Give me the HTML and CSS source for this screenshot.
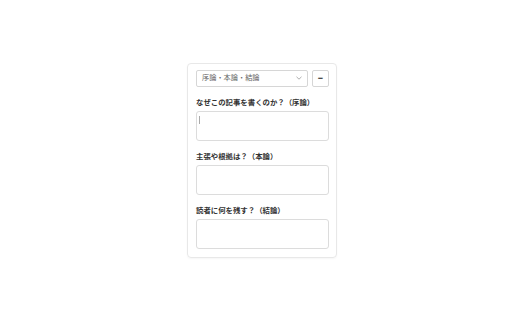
FILE: index.html
```html
<!DOCTYPE html>
<html lang="ja">
<head>
<meta charset="utf-8">
<link rel="stylesheet" href="styles.css">
</head>
<body>
<main class="stage">
  <div class="card">
    <div class="row">
      <div class="select">
        <span class="select-text">序論・本論・結論</span>
        <svg class="chev" width="6" height="4" viewBox="0 0 6 4"><path d="M0.5 0.8 L3 3.2 L5.5 0.8" fill="none" stroke="#999" stroke-width="0.8"/></svg>
      </div>
      <button class="btn">−</button>
    </div>
    <div class="field">
      <div class="label">なぜこの記事を書くのか？（序論）</div>
      <div class="box focused"><span class="caret"></span></div>
    </div>
    <div class="field">
      <div class="label">主張や根拠は？（本論）</div>
      <div class="box"></div>
    </div>
    <div class="field">
      <div class="label">読者に何を残す？（結論）</div>
      <div class="box"></div>
    </div>
  </div>
</main>
</body>
</html>
```
FILE: styles.css
```css
html, body {
  margin: 0;
  padding: 0;
  background: #fff;
  font-family: "Noto Sans CJK JP", "Noto Sans", sans-serif;
}
.stage {
  width: 512px;
  height: 320px;
  display: flex;
  align-items: center;
  justify-content: center;
  padding-left: 12px;
  box-sizing: border-box;
}
.card {
  width: 150px;
  box-sizing: border-box;
  border: 1px solid #e8e8e8;
  border-radius: 4px;
  box-shadow: 0 1px 2px rgba(0,0,0,0.04);
  padding: 6px 7px 8px 8px;
  display: flex;
  flex-direction: column;
}
.row {
  display: flex;
  gap: 4px;
  height: 17px;
}
.select {
  flex: 1;
  box-sizing: border-box;
  border: 1px solid #d6d6d6;
  border-radius: 2px;
  display: flex;
  align-items: center;
  padding: 0 5px;
  justify-content: space-between;
}
.select-text {
  font-size: 7.2px;
  color: #666;
  line-height: 1;
}
.btn {
  width: 17px;
  height: 17px;
  padding: 0;
  box-sizing: border-box;
  border: 1px solid #d6d6d6;
  border-radius: 2px;
  background: #fff;
  font-size: 9px;
  font-weight: bold;
  color: #111;
  line-height: 1;
  font-family: "Liberation Sans", sans-serif;
}
.field {
  margin-top: 10px;
  display: flex;
  flex-direction: column;
}
.field:first-of-type {
  margin-top: 12px;
}
.label {
  font-size: 7.4px;
  font-weight: bold;
  color: #333;
  line-height: 10px;
  margin-bottom: 4px;
}
.box {
  height: 30px;
  box-sizing: border-box;
  border: 1px solid #dcdcdc;
  border-radius: 3px;
  position: relative;
}
.caret {
  position: absolute;
  left: 2px;
  top: 4px;
  width: 1px;
  height: 8px;
  background: #aaa;
}
```
